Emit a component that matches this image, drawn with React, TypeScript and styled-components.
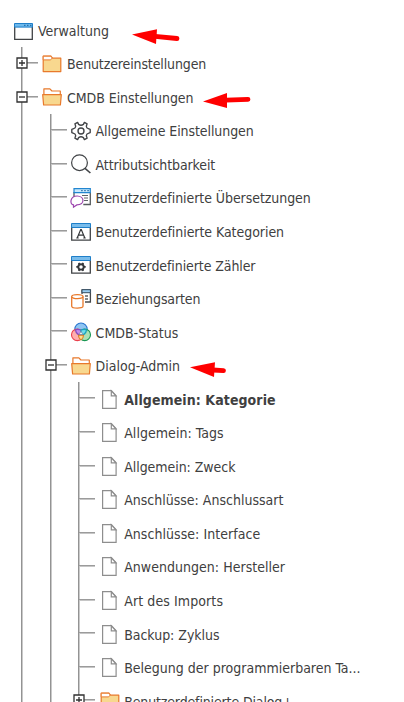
import React from 'react';
import styled, { createGlobalStyle } from 'styled-components';

const GlobalStyle = createGlobalStyle`
  html, body { margin: 0; padding: 0; background: #fff; overflow: hidden; }
  * { box-sizing: border-box; }
`;

const Page = styled.main`
  position: relative;
  width: 404px;
  height: 702px;
  padding-top: 15px;
  overflow: hidden;
  background: #fff;
  color: #404040;
  font: 14px/20px 'DejaVu Sans Condensed', 'DejaVu Sans', sans-serif;
  font-stretch: condensed;
`;

const RootRow = styled.div`
  display: flex;
  align-items: center;
  gap: 4px;
  height: 32px;
  padding-left: 14px;
`;

const Branch = styled.ul<{ $root?: boolean }>`
  list-style: none;
  margin: 0 0 0 ${p => (p.$root ? 21 : 27.6)}px;
  padding: 0;
  border-left: 1px solid #939393;
  box-shadow: inset 1px 0 #c9c9c9;
`;

const Row = styled.div`
  display: flex;
  align-items: center;
  height: 33.55px;
`;

const Connector = styled.span`
  position: relative;
  flex: none;
  width: 16px;
  height: 2px;
  margin-top: -1.6px;
  border-top: 1px solid #9b9b9b;
  border-bottom: 1px solid #c6c6c6;
`;

const Toggle = styled.svg`
  position: absolute;
  left: -6px;
  top: -6px;
  width: 12px;
  height: 12px;
`;

const IconSlot = styled.span`
  display: flex;
  flex: none;
  justify-content: center;
  width: 20px;
  margin: 0 4.6px 0 4.4px;
  svg { display: block; overflow: visible; }
`;

const Label = styled.span<{ $bold?: boolean; $track?: number }>`
  white-space: nowrap;
  padding-top: 1px;
  font-weight: ${p => (p.$bold ? 700 : 400)};
  letter-spacing: ${p => p.$track ?? 0}px;
`;

const RootLabel = styled(Label)`
  padding: 0 0 1px;
`;

const Arrow = styled.svg<{ $x: number; $y: number }>`
  position: absolute;
  left: ${p => p.$x}px;
  top: ${p => p.$y}px;
`;

type IconName = 'folder' | 'open' | 'gear' | 'search' | 'translate' | 'letter' | 'counter' | 'relation' | 'status' | 'page' | 'window';

function Icon({ name }: { name: IconName }) {
  switch (name) {
    case 'window':
      return (
        <svg width="20" height="17" viewBox="0 0 20 17" fill="none">
          <path d="M.7 4v12.3h17.6V4" fill="#fff" stroke="#404346" strokeWidth="1.3" />
          <path d="M.5.5h18v3.6H.5z" fill="#6eb9ec" stroke="#1f7fc9" />
          <path d="M10 2.3h1.5M13 2.3h1.5M16 2.3h1.5" stroke="#185f9e" strokeWidth="1" />
        </svg>
      );
    case 'folder':
      return (
        <svg width="20" height="18" viewBox="0 0 20 18" strokeLinejoin="round">
          <path d="M1.2 4.7V1.2h7.8l1.3 2h8.5v13.4H1.2z" fill="#f8d88f" stroke="#e8792b" strokeWidth="1.2" />
          <path d="M1.2 1.2H9l1.3 2-2 1.7H1.2z" fill="#fff" stroke="#e8792b" />
        </svg>
      );
    case 'open':
      return (
        <svg width="20" height="18" viewBox="0 0 20 18" strokeLinejoin="round">
          <path d="M1.9 7V.8h6l2 2.2h8.4v4" fill="#fff" stroke="#e8792b" strokeWidth="1.2" />
          <path d="M.7 6.6h18.6l-.9 10.4H1.6z" fill="#f8d88f" stroke="#e8792b" strokeWidth="1.2" />
        </svg>
      );
    case 'gear':
      return (
        <svg width="20" height="20" viewBox="0 0 20 20" fill="none" stroke="#414447" strokeWidth="1.35" strokeLinejoin="round">
          <path d="M7.6 3.4 6.6 1.4 3.9 2.9l.8 2.4q-.2 2-2 2.4L.8 8.4v3.2l1.9.7q1.8.4 2 2.4l-.8 2.4 2.7 1.5 1-2q2.4-1.7 4.8 0l1 2 2.7-1.5-.8-2.4q.2-2 2-2.4l1.9-.7V8.4l-1.9-.7q-1.8-.4-2-2.4l.8-2.4-2.7-1.5-1 2q-2.4 1.7-4.8 0z" />
          <circle cx="10" cy="10" r="3" />
        </svg>
      );
    case 'search':
      return (
        <svg width="20" height="20" viewBox="0 0 20 20" fill="none" stroke="#414447" strokeWidth="1.2">
          <circle cx="8.5" cy="8.7" r="7.9" />
          <path d="m14 14.3 5.4 4.7" strokeWidth="1.6" />
        </svg>
      );
    case 'translate':
      return (
        <svg width="20" height="20" viewBox="0 0 20 20" fill="none">
          <path d="M3 4v5M19.3 4v12.5h-7" stroke="#565b5e" strokeWidth="1.3" />
          <path d="M3 .7h16.3v4H3z" fill="#c8e9fc" stroke="#2386d0" strokeWidth="1.2" />
          <path d="M10 2.7h1.8m1.3 0h1.8m1.3 0H18" stroke="#246da9" />
          <path d="M11 7.5h6M13 10h4m-4 2.5h4" stroke="#606568" />
          <path d="M6.2 8c-7.6 0-7.6 8.7-3.7 8.9v2.3l3.3-2.3C14.3 16.7 13.6 8 6.2 8z" fill="#fff" stroke="#9c45ae" strokeWidth="1.2" />
        </svg>
      );
    case 'letter':
    case 'counter':
      return (
        <svg width="20" height="18" viewBox="0 0 20 18" fill="none">
          <path d="M.7 4v13.2h18.6V4" stroke="#404346" strokeWidth="1.3" />
          <path d="M.5.5h19v4H.5z" fill="#79bceb" stroke="#1f7fc9" />
          {name === 'letter' ? (
            <path d="m6.2 15 3.5-8.5h.6l3.5 8.5M7.4 12.2h5.2M5.3 15h2.4m4.6 0h2.4" stroke="#34373a" strokeWidth="1.2" />
          ) : (
            <>
              <circle cx="10" cy="10.9" r="2.7" stroke="#34373a" strokeWidth="1.9" />
              <path d="M5.3 10.9H7m6 0h1.7M7.7 6.9l.8 1.4m3 5.2.8 1.4m0-8-.8 1.4m-3 5.2-.8 1.4" stroke="#34373a" strokeWidth="1.8" />
            </>
          )}
        </svg>
      );
    case 'relation':
      return (
        <svg width="20" height="20" viewBox="0 0 20 20" fill="none">
          <path d="M11 5V1h8.4v12H14" stroke="#45494c" strokeWidth="1.3" />
          <path d="M11 .7h8.4v3H11z" fill="#9acdf1" stroke="#344d62" />
          <path d="M14 7h3m-3 3h3" stroke="#606467" strokeWidth="1.3" />
          <path d="M.7 7.6v9.6c0 2.5 11.3 2.5 11.3 0V7.6" fill="#fff" stroke="#e8792b" strokeWidth="1.3" />
          <ellipse cx="6.35" cy="7.6" rx="5.65" ry="2" fill="#fff" stroke="#e8792b" strokeWidth="1.3" />
        </svg>
      );
    case 'status':
      return (
        <svg width="20" height="20" viewBox="0 0 20 20" strokeWidth="1.1">
          <circle cx="10" cy="7.2" r="6.2" fill="#8fc5f3" stroke="#2a77cf" />
          <circle cx="6.3" cy="12.8" r="5.8" fill="#ff9c9c" fillOpacity=".82" stroke="#e9404c" />
          <circle cx="13.7" cy="12.8" r="5.8" fill="#9adaa5" fillOpacity=".82" stroke="#189653" />
          <path d="M4.4 8q2-1.2 5.6 0v5.2q-4 0-5.6-5.2z" fill="#c78bea" stroke="#864bc0" />
          <path d="M15.6 8q-2-1.2-5.6 0v5.2q4 0 5.6-5.2z" fill="#70dceb" stroke="#19a3bf" />
          <path d="M7.5 13.3h5q0 3-2.5 4.6-2.5-1.6-2.5-4.6z" fill="#ffe18a" stroke="#dd7c27" />
          <path d="m8.2 12.5 1.8-3.3 1.8 3.3z" fill="#fff" stroke="#697e96" strokeWidth=".7" />
        </svg>
      );
    case 'page':
      return (
        <svg width="15" height="19" viewBox="0 0 15 19" fill="#fff" stroke="#8e8e8e" strokeWidth="1.2">
          <path d="M.6.7h8.8l4.7 5v12.7H.6z" />
          <path d="M9.3.8v5h4.6z" />
        </svg>
      );
  }
}

interface Item {
  label: string;
  icon: IconName;
  bold?: boolean;
  track?: number;
  toggle?: 'plus' | 'minus';
  children?: Item[];
}

const dialogs: Item[] = [
  { label: 'Allgemein: Kategorie', icon: 'page', bold: true, track: 0.08 },
  { label: 'Allgemein: Tags', icon: 'page', track: 0.05 },
  { label: 'Allgemein: Zweck', icon: 'page', track: -0.05 },
  { label: 'Anschlüsse: Anschlussart', icon: 'page' },
  { label: 'Anschlüsse: Interface', icon: 'page', track: 0.05 },
  { label: 'Anwendungen: Hersteller', icon: 'page', track: 0.03 },
  { label: 'Art des Imports', icon: 'page', track: 0.1 },
  { label: 'Backup: Zyklus', icon: 'page', track: -0.03 },
  { label: 'Belegung der programmierbaren Ta...', icon: 'page' },
  { label: 'Benutzerdefinierte Dialog+', icon: 'folder', toggle: 'plus', track: -0.14 },
];

const tree: Item[] = [
  { label: 'Benutzereinstellungen', icon: 'folder', toggle: 'plus', track: -0.12 },
  {
    label: 'CMDB Einstellungen', icon: 'open', toggle: 'minus', track: -0.05,
    children: [
      { label: 'Allgemeine Einstellungen', icon: 'gear', track: -0.08 },
      { label: 'Attributsichtbarkeit', icon: 'search', track: -0.1 },
      { label: 'Benutzerdefinierte Übersetzungen', icon: 'translate', track: -0.06 },
      { label: 'Benutzerdefinierte Kategorien', icon: 'letter', track: -0.05 },
      { label: 'Benutzerdefinierte Zähler', icon: 'counter', track: -0.09 },
      { label: 'Beziehungsarten', icon: 'relation', track: -0.1 },
      { label: 'CMDB-Status', icon: 'status' },
      { label: 'Dialog-Admin', icon: 'open', toggle: 'minus', children: dialogs },
    ],
  },
];

function Node({ item }: { item: Item }) {
  return (
    <li>
      <Row>
        <Connector>
          {item.toggle && (
            <Toggle viewBox="0 0 12 12" fill="none" stroke="#303030" strokeWidth="1.3">
              <path d="M1 1h10v10H1z" fill="#fff" />
              <path d={item.toggle === 'plus' ? 'M3 6h6M6 3v6' : 'M3 6h6'} />
            </Toggle>
          )}
        </Connector>
        <IconSlot><Icon name={item.icon} /></IconSlot>
        <Label $bold={item.bold} $track={item.track}>{item.label}</Label>
      </Row>
      {item.children && (
        <Branch>{item.children.map(child => <Node key={child.label} item={child} />)}</Branch>
      )}
    </li>
  );
}

export default function App() {
  return (
    <>
      <GlobalStyle />
      <Page>
        <RootRow>
          <Icon name="window" />
          <RootLabel $track={0}>Verwaltung</RootLabel>
        </RootRow>
        <Branch $root>{tree.map(item => <Node key={item.label} item={item} />)}</Branch>
        <Arrow $x={132} $y={28} width="48" height="17" viewBox="0 0 48 17">
          <path d="M0 6.5 25 1.2 24 16z" fill="#f00" />
          <path d="m23 8.3 22 2.2" stroke="#f00" strokeWidth="4.8" strokeLinecap="round" />
        </Arrow>
        <Arrow $x={203} $y={92} width="48" height="17" viewBox="0 0 48 17">
          <path d="M0 9.5 24 1v15z" fill="#f00" />
          <path d="m23 8.2 22-.9" stroke="#f00" strokeWidth="4.8" strokeLinecap="round" />
        </Arrow>
        <Arrow $x={190} $y={361} width="37" height="17" viewBox="0 0 37 17">
          <path d="M0 6.3 25 1.2 24 16z" fill="#f00" />
          <path d="m23 9 10.5.7" stroke="#f00" strokeWidth="4.8" strokeLinecap="round" />
        </Arrow>
      </Page>
    </>
  );
}
